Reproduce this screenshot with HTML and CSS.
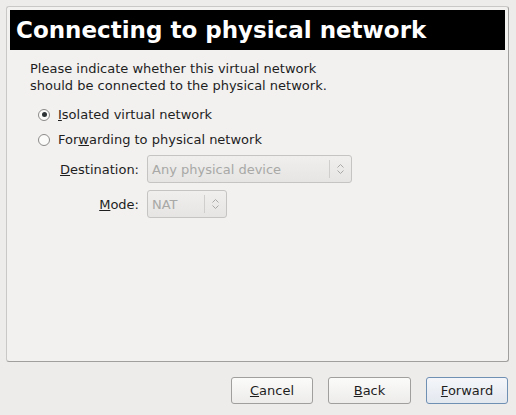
FILE: index.html
```html
<!DOCTYPE html>
<html>
<head>
<meta charset="utf-8">
<link rel="stylesheet" href="styles.css">
</head>
<body>
<div class="dialog">
  <div class="frame">
    <div class="header">Connecting to physical network</div>
    <div class="content">
      <p class="intro">Please indicate whether this virtual network<br>should be connected to the physical network.</p>
      <div class="radios">
        <label class="radio"><span class="dot checked"></span><span><u>I</u>solated virtual network</span></label>
        <label class="radio"><span class="dot"></span><span>For<u>w</u>arding to physical network</span></label>
      </div>
      <div class="form">
        <span class="flabel"><u>D</u>estination:</span>
        <div class="combo wide"><span class="ctext">Any physical device</span><span class="carrow"><svg width="9" height="12" viewBox="0 0 9 12"><path d="M1.5 4.5 L4.5 1.5 L7.5 4.5 M1.5 7.5 L4.5 10.5 L7.5 7.5" fill="none" stroke="#a8a8a6" stroke-width="1"/></svg></span></div>
        <span class="flabel"><u>M</u>ode:</span>
        <div class="combo narrow"><span class="ctext">NAT</span><span class="carrow"><svg width="9" height="12" viewBox="0 0 9 12"><path d="M1.5 4.5 L4.5 1.5 L7.5 4.5 M1.5 7.5 L4.5 10.5 L7.5 7.5" fill="none" stroke="#a8a8a6" stroke-width="1"/></svg></span></div>
      </div>
    </div>
  </div>
  <div class="buttons">
    <button class="btn"><u>C</u>ancel</button>
    <button class="btn"><u>B</u>ack</button>
    <button class="btn default"><u>F</u>orward</button>
  </div>
</div>
</body>
</html>
```

FILE: styles.css
```css
html, body {
  margin: 0;
  padding: 0;
  background: #edeceb;
  font-family: "DejaVu Sans", sans-serif;
  font-size: 13px;
  color: #1e1e1e;
}
.dialog {
  width: 516px;
  height: 415px;
  box-sizing: border-box;
  padding: 6px 7px 0 6px;
  display: flex;
  flex-direction: column;
}
.frame {
  height: 356px;
  box-sizing: border-box;
  border: 1px solid #c9c8c6;
  border-right-color: #a09f9d;
  border-bottom-color: #a09f9d;
  border-radius: 3px;
  background: #f2f1f0;
  padding: 3px;
  display: flex;
  flex-direction: column;
}
.header {
  background: #000;
  color: #fff;
  font-weight: bold;
  font-size: 23px;
  height: 40px;
  line-height: 40px;
  padding-left: 6px;
  white-space: nowrap;
}
.content {
  padding: 10px 0 0 20px;
}
.intro {
  margin: 0;
  line-height: 17px;
}
.radios {
  margin-top: 12px;
  display: flex;
  flex-direction: column;
  gap: 8px;
}
.radio {
  display: flex;
  align-items: center;
  height: 17px;
  gap: 8px;
  padding-left: 8px;
}
.dot {
  width: 10px;
  height: 10px;
  border: 1px solid #8c8b89;
  border-radius: 50%;
  background: #fbfbfa;
  position: relative;
  box-sizing: content-box;
}
.dot.checked::after {
  content: "";
  position: absolute;
  left: 2.5px;
  top: 2.5px;
  width: 5px;
  height: 5px;
  border-radius: 50%;
  background: #2e3436;
}
.form {
  margin-top: 7px;
  display: grid;
  grid-template-columns: 109px auto;
  column-gap: 8px;
  row-gap: 7px;
  align-items: center;
  justify-items: start;
}
.flabel {
  justify-self: end;
}
.combo {
  height: 28px;
  box-sizing: border-box;
  border: 1px solid #c5c4c2;
  border-radius: 3px;
  background: linear-gradient(#f0efee, #e6e5e3);
  display: flex;
  align-items: center;
  color: #a8a8a6;
}
.combo.wide { width: 205px; }
.combo.narrow { width: 80px; }
.ctext {
  flex: 1;
  padding-left: 4px;
  white-space: nowrap;
}
.carrow {
  width: 21px;
  height: 18px;
  border-left: 1px solid #cfcecc;
  display: flex;
  align-items: center;
  justify-content: center;
}
.buttons {
  display: flex;
  justify-content: flex-end;
  gap: 15px;
  margin-top: 15px;
  padding-right: 1px;
}
.btn {
  width: 82px;
  height: 27px;
  box-sizing: border-box;
  font-family: "DejaVu Sans", sans-serif;
  font-size: 13px;
  color: #1e1e1e;
  border: 1px solid #a09f9d;
  border-radius: 3px;
  background: linear-gradient(#fbfbfa, #edeceb);
  padding: 0;
}
.btn.default {
  border-color: #6f8fb3;
  background: linear-gradient(#f4f6f9, #e3e8ef);
}
.btn:nth-child(2) { width: 83px; }
```
